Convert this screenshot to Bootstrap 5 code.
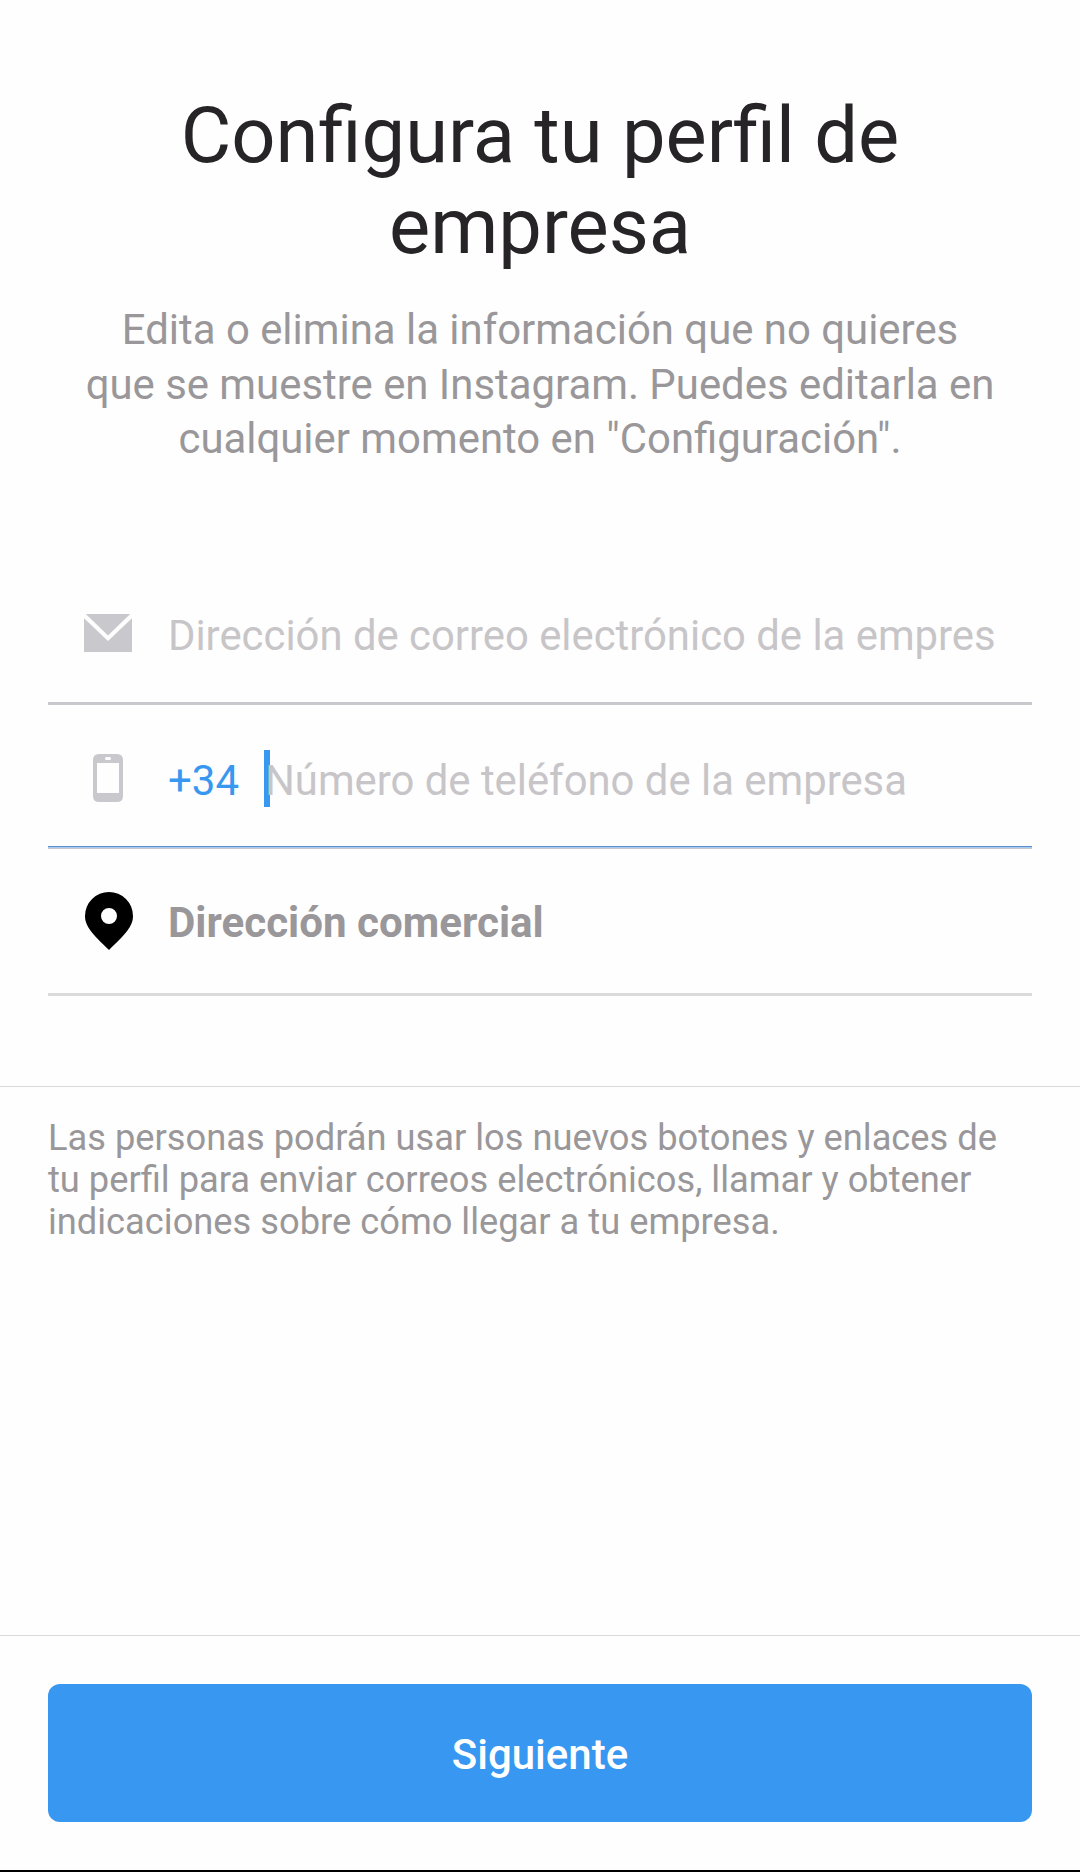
<!DOCTYPE html>
<html lang="es">
<head>
<meta charset="utf-8">
<meta name="viewport" content="width=device-width, initial-scale=1">
<title>Configura tu perfil de empresa</title>
<link href="https://cdn.jsdelivr.net/npm/bootstrap@5.3.0/dist/css/bootstrap.min.css" rel="stylesheet">
<style>
  body { font-family: Roboto, "Liberation Sans", sans-serif; background: #fefefe; color: #262426; }
  .screen { height: 1872px; border-bottom: 2px solid #000; }
  .page-head { padding: 90px 72px 0; height: 467px; }
  .page-title { font-size: 77.7px; line-height: 91px; font-weight: 400; margin-bottom: 31px; }
  .page-sub { font-size: 41.9px; line-height: 54.5px; color: #999799; }
  .contact-form { margin: 94px 48px 0; font-size: 42px; line-height: 50px; }
  .field { height: 144px; padding: 50px 36px 0; border-bottom: 3px solid #c9c8cc; }
  .field-phone { padding-top: 51px; border-bottom: 0; background: linear-gradient(#5b8fc7 0 1px, #a9cdf2 1px 2px, #c6c7ce 2px) bottom / 100% 3px no-repeat; }
  .field-address { height: 147px; padding-top: 49px; border-bottom-color: #dadada; }
  .field-icon { width: 84px; }
  .field-icon svg { display: block; }
  .hint { color: #c7c5c8; font-size: 41.83px; }
  .prefix { color: #3897f0; width: 97px; }
  .caret { width: 6px; height: 57px; top: -6px; left: -1px; background: #3897f0; }
  .address-label { color: #999799; font-size: 42.1px; }
  .info { margin-top: 90px; padding: 30px 48px 0; border-top: 1px solid #d9d9d9; font-size: 36.27px; line-height: 42px; color: #999799; }
  .action-bar { border-top: 1px solid #d9d9d9; padding: 48px; }
  .btn-next { --bs-btn-bg: #3897f0; --bs-btn-color: #fff; height: 138px; border: 0; border-radius: 12px; font-size: 42px; font-weight: 500; line-height: 50px; padding-top: 9px; }
</style>
<script src="https://cdn.jsdelivr.net/npm/bootstrap@5.3.0/dist/js/bootstrap.bundle.min.js"></script>
</head>
<body>
<main class="screen d-flex flex-column overflow-hidden">
  <header class="page-head text-center">
    <h1 class="page-title">Configura tu perfil de<br>empresa</h1>
    <p class="page-sub mb-0 text-nowrap">Edita o elimina la información que no quieres<br>que se muestre en Instagram. Puedes editarla en<br>cualquier momento en "Configuración".</p>
  </header>
  <section class="contact-form">
    <div class="field d-flex align-items-start">
      <div class="field-icon flex-shrink-0">
        <svg width="48" height="41" viewBox="0 0 48 41"><path fill="#c9c8cc" d="M1.800 3H46.200L24 24.500ZM0 7.200 24 30 48 7.200V41H0Z"/></svg>
      </div>
      <div class="hint text-nowrap">Dirección de correo electrónico de la empres</div>
    </div>
    <div class="field field-phone d-flex align-items-start">
      <div class="field-icon flex-shrink-0">
        <svg width="48" height="46" viewBox="0 2 48 46" overflow="visible"><path fill="#c9c8cc" fill-rule="evenodd" d="M15 0H33Q39 0 39 6V42Q39 48 33 48H15Q9 48 9 42V6Q9 0 15 0ZM13 9V39H35V9ZM22.500 3Q21 3 21 4.500T22.500 6H25.500Q27 6 27 4.500T25.500 3Z"/></svg>
      </div>
      <div class="prefix flex-shrink-0">+34</div>
      <div class="hint position-relative text-nowrap"><span class="caret position-absolute"></span><span class="position-relative">Número de teléfono de la empresa</span></div>
    </div>
    <div class="field field-address d-flex align-items-start">
      <div class="field-icon flex-shrink-0">
        <svg width="49" height="52" viewBox="0 6 49 52" overflow="visible"><path fill="#000" fill-rule="evenodd" d="M25 0A24 24 0 0 0 1 24C1 34 8 42 25 58C42 42 49 34 49 24A24 24 0 0 0 25 0ZM25 16a8 8 0 1 1 0 16a8 8 0 1 1 0-16Z"/></svg>
      </div>
      <div class="address-label fw-bold">Dirección comercial</div>
    </div>
  </section>
  <p class="info mb-0 text-nowrap">Las personas podrán usar los nuevos botones y enlaces de<br>tu perfil para enviar correos electrónicos, llamar y obtener<br>indicaciones sobre cómo llegar a tu empresa.</p>
  <footer class="action-bar mt-auto">
    <button type="button" class="btn btn-next w-100">Siguiente</button>
  </footer>
</main>
</body>
</html>
